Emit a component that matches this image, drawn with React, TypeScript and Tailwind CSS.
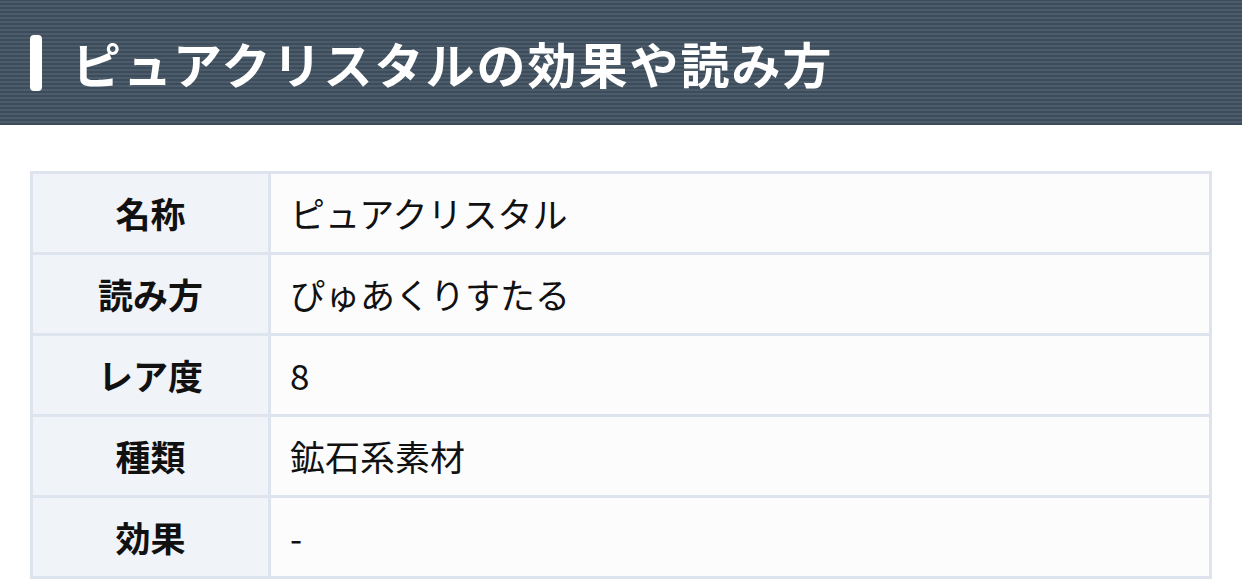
import { FC } from "react";

const rows: { label: string; value: string }[] = [
    { label: "名称", value: "ピュアクリスタル" },
    { label: "読み方", value: "ぴゅあくりすたる" },
    { label: "レア度", value: "8" },
    { label: "種類", value: "鉱石系素材" },
    { label: "効果", value: "-" },
];

const App: FC = () => {
    return (
        <div className="w-[1242px] h-[579px] overflow-hidden bg-white font-['Noto_Sans_CJK_JP','Noto_Sans',sans-serif]">
            <div className="h-[125px] flex items-center pl-[30px] bg-[repeating-linear-gradient(0deg,#3d4c5a_0px,#3d4c5a_2px,#4c5c6a_2px,#4c5c6a_4px)]">
                <span className="w-[12px] h-[56px] rounded-[4px] bg-white" />
                <h2 className="ml-[30px] text-white font-bold text-[49px] leading-none tracking-[2px]">
                    ピュアクリスタルの効果や読み方
                </h2>
            </div>

            <table className="mt-[46px] ml-[30px] w-[1182px] border-collapse border-[3px] border-[#dde4ed]">
                <tbody>
                    {rows.map((r) => (
                        <tr key={r.label} className="h-[81px]">
                            <th className="w-[238px] border-[3px] border-[#dde4ed] bg-[#f0f3f7] text-center font-bold text-[35px] text-[#111]">
                                {r.label}
                            </th>
                            <td className="border-[3px] border-[#dde4ed] bg-[#fcfcfd] pl-[19px] text-[35px] text-[#111]">
                                {r.value}
                            </td>
                        </tr>
                    ))}
                </tbody>
            </table>
        </div>
    );
};

export default App;
